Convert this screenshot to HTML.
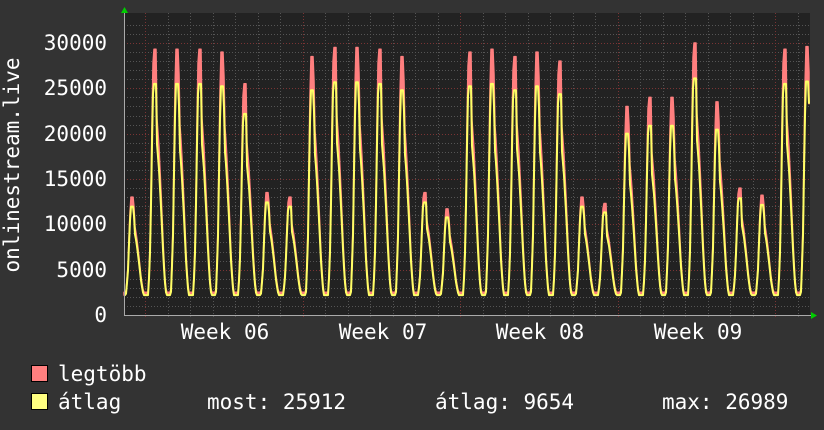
<!DOCTYPE html>
<html><head><meta charset="utf-8"><style>
html,body{margin:0;padding:0;background:#333;}
svg{display:block;}
text{font-family:"DejaVu Sans Mono","Liberation Mono",monospace;fill:#fff;font-size:21px;}
</style></head><body>
<svg id="g" width="824" height="430" viewBox="0 0 824 430" xmlns="http://www.w3.org/2000/svg">
<rect width="824" height="430" fill="#333"/>
<rect x="124" y="13" width="686" height="302" fill="#222"/>
<g id="grid"></g>
<path id="band" fill="#ff7f7f" stroke="#ff7f7f" stroke-width="1.5" stroke-linejoin="round"/>
<polyline id="avg" fill="none" stroke="#ffff66" stroke-width="2" stroke-linejoin="round"/>
<line x1="124" y1="315.5" x2="814" y2="315.5" stroke="#aaa" stroke-width="1"/>
<line x1="124.5" y1="12" x2="124.5" y2="315" stroke="#aaa" stroke-width="1"/>
<polygon points="121,13 128,13 124.5,7" fill="#0c0"/>
<polygon points="811,312 811,319 817,315.5" fill="#0c0"/>
<g text-anchor="end">
<text x="107" y="50">30000</text>
<text x="107" y="95">25000</text>
<text x="107" y="141">20000</text>
<text x="107" y="186">15000</text>
<text x="107" y="231">10000</text>
<text x="107" y="277">5000</text>
<text x="107" y="322">0</text>
</g>
<text transform="translate(19,165) rotate(-90)" text-anchor="middle">onlinestream.live</text>
<g text-anchor="middle">
<text x="225" y="339">Week 06</text>
<text x="383" y="339">Week 07</text>
<text x="540" y="339">Week 08</text>
<text x="698" y="339">Week 09</text>
</g>
<rect x="31.5" y="365.5" width="16" height="16" fill="#ff7f7f" stroke="#000"/>
<rect x="31.5" y="393.5" width="16" height="16" fill="#ffff80" stroke="#000"/>
<text x="58" y="381">legtöbb</text>
<text x="58" y="409">átlag</text>
<text x="207" y="409">most: 25912</text>
<text x="435" y="409">átlag: 9654</text>
<text x="662" y="409">max: 26989</text>
</svg>
<script>
var ns="http://www.w3.org/2000/svg",grid=document.getElementById('grid');
function ln(x1,y1,x2,y2,c){var l=document.createElementNS(ns,'line');l.setAttribute('x1',x1);l.setAttribute('y1',y1);l.setAttribute('x2',x2);l.setAttribute('y2',y2);l.setAttribute('stroke',c);l.setAttribute('stroke-width','1');l.setAttribute('stroke-dasharray','1,2');grid.appendChild(l);}
function Y(v){return 315-v*272/30000;}
for(var v=1000;v<=32000;v+=1000){var y=Math.round(Y(v))+0.5;if(y<13)break;ln(124,y,810,y,v%5000==0?'#7a3434':'#555');}
for(var x=145-22.5;x<810;x+=22.5){var k=Math.round((x-145)/22.5);var xx=Math.round(x)+0.5;if(xx<126)continue;ln(xx,13,xx,318,(k%7==0)?'#7a3434':'#555');}
var peaks=[13000,29300,29300,29300,29000,25500,13500,13000,28500,29500,29500,29300,28500,13500,11700,29000,29300,28500,29000,28000,13000,12300,23000,24000,24000,30000,23500,14000,13200,29300,29600];
var K=[[0.15,0],[0.24,0.25],[0.3,0.65],[0.34,0.88],[0.37,1],[0.5,1],[0.53,0.72],[0.62,0.6],[0.72,0.4],[0.82,0.17],[0.9,0.04],[0.95,0],[1.15,0]];
function shape(t){for(var j=0;j<K.length-1;j++){if(t>=K[j][0]&&t<=K[j+1][0]){return K[j][1]+(K[j+1][1]-K[j][1])*(t-K[j][0])/(K[j+1][0]-K[j][0]);}}return 0;}
var mx=[],av=[];
for(var x=124;x<=809;x+=1){
 var d=(x-122.5)/22.5,i=Math.floor(d),t=d-i;
 var pi=Math.min(i,peaks.length-1),p,f,ar;
 if(t<0.15){p=i>0?peaks[i-1]:2300;f=shape(t+1);}else{p=peaks[pi];f=shape(t);}
 var base=2500;
 var m=base+(p-base)*f;
 ar=p>20000?0.87:0.92;
 var ab=2200;
 var fa=f>0.9?0.92+(f-0.9)*0.8:f;
 var a=ab+(p*ar-ab)*Math.min(1,fa);
 mx.push([x,Y(m)]);av.push([x,Y(a)]);
}
var dd='M'+mx.map(function(p){return p[0]+','+p[1].toFixed(1)}).join(' L');
for(var j=av.length-1;j>=0;j--)dd+=' L'+av[j][0]+','+av[j][1].toFixed(1);
document.getElementById('band').setAttribute('d',dd+'Z');
document.getElementById('avg').setAttribute('points',av.map(function(p){return p[0]+','+p[1].toFixed(1)}).join(' '));
</script>
</body></html>
